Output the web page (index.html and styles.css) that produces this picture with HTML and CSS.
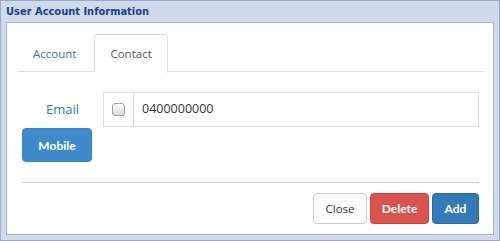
FILE: index.html
```html
<!DOCTYPE html>
<html>
<head>
<meta charset="utf-8">
<link rel="stylesheet" href="styles.css">
</head>
<body>
<div class="window">
  <div class="title">User Account Information</div>
  <div class="panel">
    <ul class="tabs">
      <li class="tab"><a>Account</a></li>
      <li class="tab active"><a>Contact</a></li>
    </ul>
    <div class="content">
      <div class="side">
        <div class="label">Email</div>
        <button class="btn btn-mobile">Mobile</button>
      </div>
      <div class="input-group">
        <span class="addon"><span class="check"></span></span>
        <span class="field">0400000000</span>
      </div>
    </div>
    <div class="rule"></div>
    <div class="footer">
      <button class="btn btn-default">Close</button>
      <button class="btn btn-danger">Delete</button>
      <button class="btn btn-primary">Add</button>
    </div>
  </div>
</div>
</body>
</html>
```
FILE: styles.css
```css
html, body { margin: 0; padding: 0; background: #fff; }
body { font-family: "Open Sans", "Noto Sans", sans-serif; font-size: 11.5px; color: #333; }
.window {
  width: 500px; height: 241px; box-sizing: border-box;
  background: #cfdbea; border: 1px solid #9aabc6;
  display: flex; flex-direction: column;
}
.title {
  height: 21px; line-height: 22px; padding-left: 5px;
  font-family: "DejaVu Sans Condensed", "DejaVu Sans", sans-serif;
  font-weight: bold; font-size: 11px; color: #15428b;
}
.panel {
  flex: 1; margin: 0 5px 5px 5px; background: #fff;
  border: 1px solid #a3b7d3; padding: 0 9px 0 10px;
  display: flex; flex-direction: column;
}
.tabs {
  list-style: none; margin: 11px 0 0 0; padding: 0;
  display: flex; border-bottom: 1px solid #ddd; height: 37px;
}
.tab { margin-right: 2px; }
.tab a {
  display: block; padding: 10px 15px; line-height: 17px; height: 17px;
  color: #3a75b0; border: 1px solid transparent; border-radius: 4px 4px 0 0;
}
.tab.active a {
  color: #555; background: #fff; border-color: #ddd; border-bottom-color: #fff;
  height: 17px; margin-bottom: -1px; padding-bottom: 10px;
}
.content { display: flex; padding: 20px 5px 0 5px; }
.side { width: 81px; display: flex; flex-direction: column; }
.label { height: 35px; line-height: 35px; text-align: center; color: #3a75b0; font-size: 13px; }
.input-group {
  flex: 1; display: flex; border: 1px solid #ddd; box-sizing: border-box; height: 35px;
}
.addon {
  width: 29px; border-right: 1px solid #ddd; display: flex; align-items: center; justify-content: center;
}
.check {
  width: 11px; height: 11px; border: 1px solid #a0a0a0; border-radius: 3px;
  background: linear-gradient(#fafafa, #dcdcdc);
}
.field { padding-left: 8px; line-height: 32px; color: #333; font-size: 12.5px; }
.btn {
  font-family: inherit; font-size: 11.5px; border-radius: 4px; border: 1px solid transparent;
  padding: 0; height: 31px; cursor: pointer;
}
.btn-strong { font-family: Lato, "Open Sans", sans-serif; font-weight: bold; font-size: 12px; }
.btn-mobile {
  width: 70px; height: 34px; margin-top: 1px; background: #3f8acb; color: #fff;
  border-color: #3a82c2; font-family: Lato, "Open Sans", sans-serif; font-weight: bold; font-size: 12px;
}
.rule { border-top: 1px solid #ccc; margin: 20px 5px 0 5px; }
.footer { display: flex; justify-content: flex-end; gap: 3px; padding: 10px 5px 0 5px; }
.btn-default { width: 54px; background: #fff; color: #333; border-color: #ccc; }
.btn-danger {
  width: 59px; background: #d9534f; color: #fff; border-color: #d43f3a;
  font-family: Lato, "Open Sans", sans-serif; font-weight: bold; font-size: 12px;
}
.btn-primary {
  width: 47px; background: #337ab7; color: #fff; border-color: #2e6da4;
  font-family: Lato, "Open Sans", sans-serif; font-weight: bold; font-size: 12px;
}
```
